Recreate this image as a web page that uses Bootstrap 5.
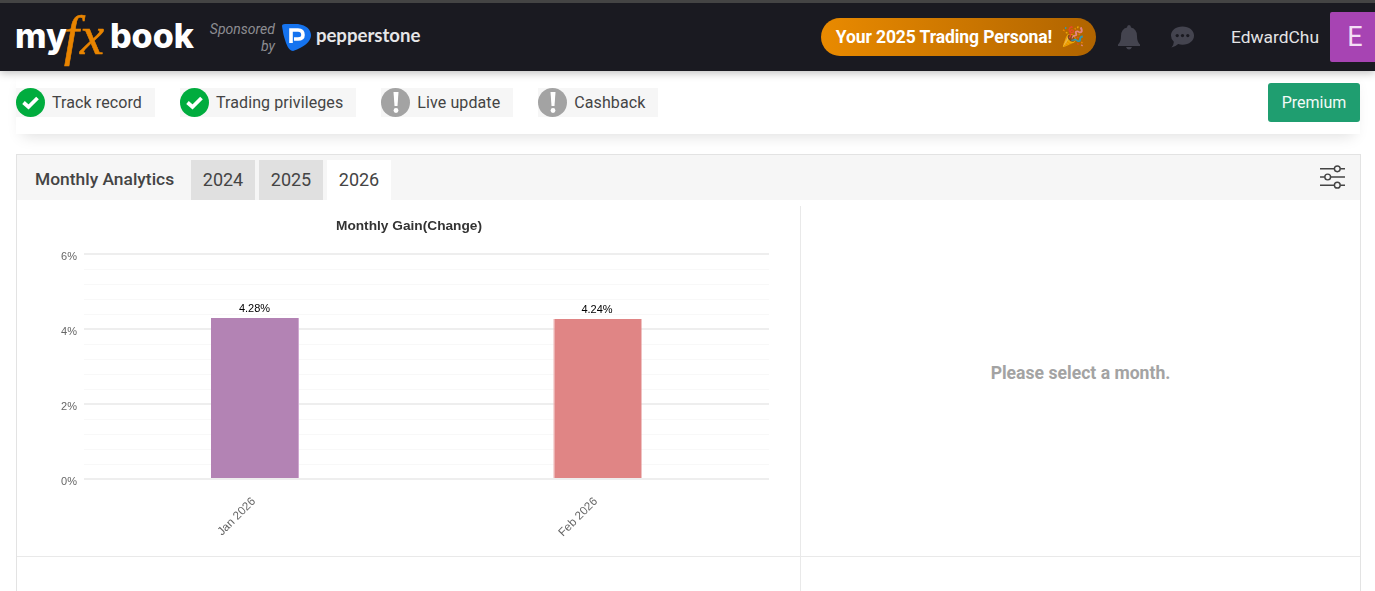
<!DOCTYPE html>
<html lang="en">
<head>
  <meta charset="UTF-8">
  <title>Monthly Analytics</title>
  <link href="https://cdn.jsdelivr.net/npm/bootstrap@5.3.0/dist/css/bootstrap.min.css" rel="stylesheet">
  <style>
    body {
      font-family: Roboto, "Liberation Sans", sans-serif;
      background-color: #fff;
      color: #444;
      overflow: hidden;
      height: 591px;
    }

    .top-bar {
      height: 71px;
      background-color: #1a1a21;
      border-top: 3px solid #444;
      padding-left: 15px;
      box-shadow: 0 2px 8px rgba(0, 0, 0, 0.25);
    }

    .logo-text {
      padding-bottom: 2px;
      font-family: Inter, sans-serif;
      font-weight: 800;
      font-size: 34px;
      line-height: 1;
      color: #fff;
    }

    .logo-fx {
      font-family: "Liberation Serif", serif;
      font-style: italic;
      font-weight: 400;
      font-size: 54px;
      letter-spacing: 1px;
      color: #e88400;
      -webkit-text-stroke: 0.6px #e88400;
      margin: 0 5px 0 -3px;
    }

    .sponsor-text {
      font-style: italic;
      font-size: 14px;
      line-height: 17px;
      color: #8d8d92;
      text-align: right;
      margin-left: 16px;
      margin-top: 1px;
    }

    .pepper-logo { margin-left: 6px; }

    .pepper-name {
      font-family: Lato, sans-serif;
      font-weight: 700;
      font-size: 18.6px;
      color: #e6e6e8;
      margin-left: 5px;
      margin-top: -3px;
    }

    .persona-btn {
      width: 275px;
      height: 38px;
      margin-right: 21px;
      padding-left: 4px;
      border-radius: 19px;
      background: linear-gradient(90deg, #e98a00, #b06400);
      color: #fff;
      font-weight: 700;
      font-size: 17.5px;
      letter-spacing: -0.1px;
    }

    .persona-emoji {
      font-size: 19px;
      margin-left: 9px;
      opacity: 0.75;
    }

    .chat-icon { margin-left: 29px; }

    .user-name {
      color: #e4e4e6;
      font-size: 17.4px;
      margin-left: 36px;
      margin-right: 11px;
      margin-top: 1px;
    }

    .user-box {
      width: 45px;
      height: 50px;
      margin-top: 9px;
      padding-left: 5px;
      background-color: #a744b3;
      color: #f3dff5;
      font-size: 27px;
      border-radius: 2px 0 0 2px;
    }

    .status-panel {
      height: 63px;
      margin: 0 15px 20px 16px;
      padding-top: 17px;
      box-shadow: 0 8px 14px -6px rgba(0, 0, 0, 0.13);
    }

    .status-item {
      height: 29px;
      background-color: #f6f6f6;
      padding-right: 13px;
      margin-right: 25px;
      font-size: 16px;
      letter-spacing: 0.1px;
      color: #444;
      white-space: nowrap;
    }

    .status-dot {
      width: 29px;
      height: 29px;
      border-radius: 50%;
      margin-right: 7px;
    }

    .dot-ok { background-color: #00ac3e; }
    .dot-warn { background-color: #a3a3a3; }

    .premium-btn {
      width: 92px;
      height: 39px;
      margin-top: -5px;
      background-color: #1f9e70;
      color: #f2faf7;
      font-size: 16px;
      border-radius: 3px;
    }

    .analytics-box {
      margin: 0 14px 0 16px;
      border: 1px solid #e3e3e3;
      border-bottom: 0;
    }

    .analytics-head {
      height: 45px;
      background-color: #f6f6f6;
      padding-top: 5px;
      padding-left: 18px;
    }

    .analytics-title {
      width: 156px;
      padding-bottom: 1px;
      font-size: 17.4px;
      font-weight: 500;
      color: #444;
    }

    .year-tab {
      width: 64px;
      height: 40px;
      margin-right: 4px;
      padding-bottom: 2px;
      background-color: #e0e0e0;
      font-size: 18px;
      color: #444;
    }

    .year-tab-active { background-color: #fff; }

    .filter-icon {
      margin-right: 15px;
      margin-top: 5px;
    }

    .chart-row { padding-top: 6px; }

    .chart-cell {
      width: 784px;
      height: 351px;
      border-right: 1px solid #e9e9e9;
      border-bottom: 1px solid #e9e9e9;
    }

    .pick-cell {
      height: 351px;
      padding-bottom: 16px;
      border-bottom: 1px solid #e9e9e9;
      font-size: 17.6px;
      font-weight: 700;
      color: #a3a3a3;
    }

    .empty-cell { width: 784px; height: 40px; border-right: 1px solid #e9e9e9; }

    .chart-svg {
      display: block;
      font-family: "Liberation Sans", sans-serif;
      will-change: transform;
    }
  </style>
</head>
<body>
  <!-- top bar -->
  <div class="top-bar d-flex align-items-start">
    <div class="logo-text d-flex align-items-center h-100">my<span class="logo-fx">fx</span>book</div>
    <div class="sponsor-text align-self-center">Sponsored<br>by</div>
    <svg class="pepper-logo align-self-center" width="30" height="28" viewBox="0 0 30 28">
      <path d="M1 3 Q1 1 4 1 L17 1 Q30 3 30 13 Q29 22 12 28 Q8 28 5 20 Q2 12 1 3 Z" fill="#1573ef"/>
      <path d="M10 20 V7 H17 Q22 7 22 12 Q22 16 17 16 H13" fill="none" stroke="#fff" stroke-width="3.6"/>
    </svg>
    <div class="pepper-name align-self-center">pepperstone</div>

    <div class="ms-auto d-flex align-items-start h-100">
      <div class="persona-btn d-flex align-items-center justify-content-center align-self-center">Your 2025 Trading Persona!<span class="persona-emoji">🎉</span></div>
      <svg class="align-self-center" width="24" height="26" viewBox="0 0 24 26">
        <path d="M12 1 Q14 1 14 3.5 Q20 5 20 12 Q20 18 23 20.5 V22 H1 V20.5 Q4 18 4 12 Q4 5 10 3.5 Q10 1 12 1 Z M9 23 H15 Q14 25.5 12 25.5 Q10 25.5 9 23 Z" fill="#44444f"/>
      </svg>
      <svg class="chat-icon align-self-center" width="25" height="24" viewBox="0 0 26 24">
        <path d="M13 1 C20 1 25 5 25 10.5 C25 16 20 20 13 20 Q10.5 20 8.5 19.2 Q5 22.5 1.5 23 Q4 20 4 17 Q1 14.5 1 10.5 C1 5 6 1 13 1 Z" fill="#44444f"/>
        <circle cx="7.5" cy="10.5" r="1.7" fill="#1a1a21"/><circle cx="13" cy="10.5" r="1.7" fill="#1a1a21"/><circle cx="18.5" cy="10.5" r="1.7" fill="#1a1a21"/>
      </svg>
      <div class="user-name align-self-center">EdwardChu</div>
      <div class="user-box d-flex align-items-center justify-content-center">E</div>
    </div>
  </div>

  <!-- status badges -->
  <div class="status-panel d-flex align-items-start">
    <div class="status-item d-flex align-items-center"><span class="status-dot dot-ok d-flex align-items-center justify-content-center"><svg width="19" height="15" viewBox="0 0 19 15"><path d="M2.5 7.5 L7.5 12 L16.5 3" fill="none" stroke="#fff" stroke-width="3.8"/></svg></span>Track record</div>
    <div class="status-item d-flex align-items-center"><span class="status-dot dot-ok d-flex align-items-center justify-content-center"><svg width="19" height="15" viewBox="0 0 19 15"><path d="M2.5 7.5 L7.5 12 L16.5 3" fill="none" stroke="#fff" stroke-width="3.8"/></svg></span>Trading privileges</div>
    <div class="status-item d-flex align-items-center"><span class="status-dot dot-warn d-flex align-items-center justify-content-center"><svg width="6" height="21" viewBox="0 0 6 21"><path d="M0.5 0 H5.5 L4.5 14 H1.5 Z" fill="#fff"/><circle cx="3" cy="18.5" r="2.4" fill="#fff"/></svg></span>Live update</div>
    <div class="status-item d-flex align-items-center"><span class="status-dot dot-warn d-flex align-items-center justify-content-center"><svg width="6" height="21" viewBox="0 0 6 21"><path d="M0.5 0 H5.5 L4.5 14 H1.5 Z" fill="#fff"/><circle cx="3" cy="18.5" r="2.4" fill="#fff"/></svg></span>Cashback</div>
    <div class="premium-btn ms-auto d-flex align-items-center justify-content-center">Premium</div>
  </div>

  <!-- analytics -->
  <div class="analytics-box">
    <div class="analytics-head d-flex align-items-start">
      <div class="analytics-title d-flex align-items-center h-100 flex-shrink-0">Monthly Analytics</div>
      <div class="year-tab d-flex align-items-center justify-content-center">2024</div>
      <div class="year-tab d-flex align-items-center justify-content-center">2025</div>
      <div class="year-tab year-tab-active d-flex align-items-center justify-content-center">2026</div>
      <svg class="filter-icon ms-auto" width="25" height="24" viewBox="0 0 26 25" fill="none" stroke="#444" stroke-width="1.500">
        <path d="M0 4 H15 M21 4 H26 M0 12.500 H5 M11 12.500 H26 M0 21 H15 M21 21 H26"/>
        <circle cx="18" cy="4" r="3"/><circle cx="8" cy="12.500" r="3"/><circle cx="18" cy="21" r="3"/>
      </svg>
    </div>
    <div class="chart-row d-flex">
      <div class="chart-cell flex-shrink-0">
        <svg class="chart-svg" width="783" height="350" viewBox="17 206 783 350">
          <text x="409" y="230" text-anchor="middle" font-size="13.700" font-weight="700" fill="#333">Monthly Gain(Change)</text>
          <g stroke="#f8f8f8" stroke-width="1">
            <path d="M84 269.500 H769 M84 284.500 H769 M84 299.500 H769 M84 314.500 H769 M84 344.500 H769 M84 359.500 H769 M84 374.500 H769 M84 389.500 H769 M84 419.500 H769 M84 434.500 H769 M84 449.500 H769 M84 464.500 H769"/>
          </g>
          <g stroke="#eeeeee" stroke-width="2">
            <path d="M84 254 H769 M84 329 H769 M84 404 H769 M84 479 H769"/>
          </g>
          <rect x="211" y="318" width="87" height="160" fill="#b383b4"/>
          <rect x="298" y="318" width="1" height="160" fill="#cfa8d0"/>
          <rect x="553.500" y="319" width="1" height="159" fill="#efb4b4"/>
          <rect x="554.500" y="319" width="87" height="159" fill="#e08585"/>
          <g font-size="11" fill="#666" text-anchor="end">
            <text x="77" y="260">6%</text>
            <text x="77" y="335">4%</text>
            <text x="77" y="410">2%</text>
            <text x="77" y="485">0%</text>
          </g>
          <g font-size="11" fill="#000" text-anchor="middle">
            <text x="254.500" y="312">4.28%</text>
            <text x="597" y="313">4.24%</text>
          </g>
          <g font-size="11.700" fill="#666" text-anchor="end">
            <text transform="translate(256 502) rotate(-45)">Jan 2026</text>
            <text transform="translate(598 502) rotate(-45)">Feb 2026</text>
          </g>
        </svg>
      </div>
      <div class="pick-cell flex-grow-1 d-flex align-items-center justify-content-center">Please select a month.</div>
    </div>
    <div class="d-flex"><div class="empty-cell"></div></div>
  </div>

  <script src="https://cdn.jsdelivr.net/npm/bootstrap@5.3.0/dist/js/bootstrap.bundle.min.js"></script>
</body>
</html>
